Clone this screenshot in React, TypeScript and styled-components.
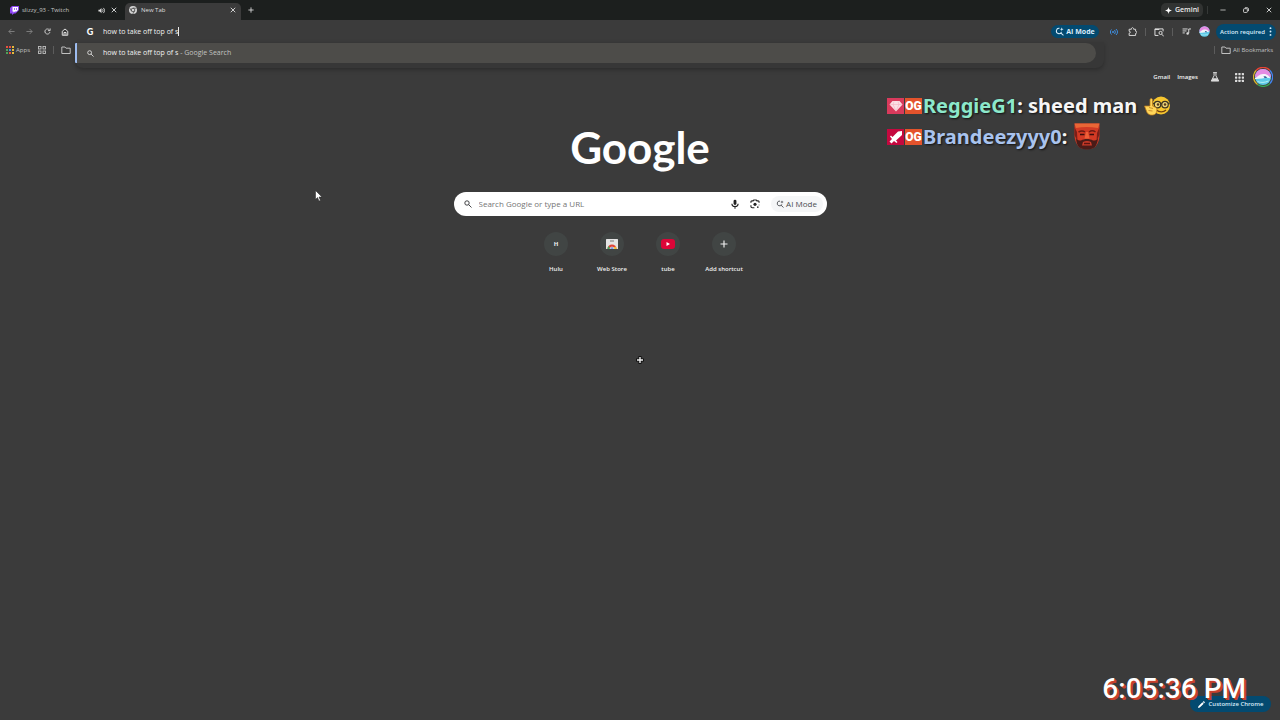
import React from "react";
import styled, { createGlobalStyle } from "styled-components";

const GlobalStyle = createGlobalStyle`
  *, *::before, *::after { box-sizing: border-box; }
  html, body { margin: 0; background: #3b3b3b; }
  body { font-family: "Open Sans", "Noto Sans", sans-serif; font-size: 7px; line-height: 10px; color: #e8e8e8; }
  button, input { font: inherit; color: inherit; border: 0; padding: 0; margin: 0; background: none; outline: none; }
  a { color: inherit; text-decoration: none; }
  svg { display: block; flex: none; }
`;

const Window = styled.div`
  position: relative;
  display: flex;
  flex-direction: column;
  min-height: 100vh;
  overflow: hidden;
  background: #3b3b3b;
`;

const Spacer = styled.div`
  flex: 1;
`;

const TabStrip = styled.header`
  display: flex;
  align-items: flex-end;
  height: 20px;
  padding-left: 3px;
  background: #1c1f1e;
`;

const Tab = styled.div<{ $active?: boolean }>`
  display: flex;
  align-items: center;
  gap: ${(p) => (p.$active ? 4 : 3)}px;
  width: ${(p) => (p.$active ? 116 : 122)}px;
  height: 17px;
  padding: ${(p) => (p.$active ? "0 4px 3px 4px" : "0 7px 3px 7px")};
  border-radius: 5px 5px 0 0;
  background: ${(p) => (p.$active ? "#3b3b3b" : "transparent")};
  color: ${(p) => (p.$active ? "#dedede" : "#c4c6c5")};
  font-size: 6px;
`;

const TabTitle = styled.span`
  flex: 1;
  white-space: nowrap;
`;

const IconButton = styled.button<{ $w?: number; $color?: string }>`
  display: flex;
  align-items: center;
  justify-content: center;
  flex: none;
  width: ${(p) => p.$w ?? 18}px;
  height: 14px;
  color: ${(p) => p.$color ?? "#dcdcdc"};
`;

const TabButton = styled(IconButton)`
  width: 9px;
  height: 10px;
`;

const StripControls = styled.div`
  display: flex;
  align-items: center;
  height: 20px;
`;

const GeminiButton = styled.button`
  display: flex;
  align-items: center;
  justify-content: center;
  gap: 3px;
  width: 42px;
  height: 14px;
  border-radius: 5px;
  background: #313332;
  color: #ececec;
  font-weight: 600;
`;

const Toolbar = styled.div`
  display: flex;
  align-items: center;
  height: 23px;
  padding: 0 4px 0 2px;
`;

const Omnibox = styled.div`
  display: flex;
  align-items: center;
  flex: 1;
  gap: 9px;
  padding-left: 12px;
`;

const GoogleMark = styled.span`
  width: 8px;
  text-align: center;
  font: 900 9px/10px Lato, sans-serif;
  color: #fff;
`;

const Query = styled.div`
  display: flex;
  align-items: center;
  flex: 1;
  color: #f1f1f1;
`;

const OmniInput = styled.input`
  field-sizing: content;
  height: 10px;
`;

const Caret = styled.span`
  width: 1px;
  height: 9px;
  background: #ececec;
`;

const BluePill = styled.button<{ $w: number; $h: number; $gap?: number }>`
  display: flex;
  align-items: center;
  justify-content: center;
  gap: ${(p) => p.$gap ?? 4}px;
  flex: none;
  width: ${(p) => p.$w}px;
  height: ${(p) => p.$h}px;
  border-radius: 8px;
  background: #034a70;
  color: #d8ecfa;
  font-size: 6px;
  font-weight: 600;
  white-space: nowrap;
`;

const AiPill = styled(BluePill)`
  font-size: 7px;
  font-weight: 700;
  margin-right: 6px;
`;

const Divider = styled.span<{ $m?: number; $dark?: boolean }>`
  width: 1px;
  height: 8px;
  margin: 0 ${(p) => p.$m ?? 4}px;
  background: ${(p) => (p.$dark ? "#353837" : "#5c5c5c")};
`;

const BookmarkBar = styled.nav`
  display: flex;
  align-items: center;
  height: 14px;
  padding: 0 7px 0 6px;
  color: #c0c0c0;
  font-size: 6px;
`;

const Bookmark = styled.a`
  display: flex;
  align-items: center;
  gap: 2px;
  white-space: nowrap;
`;

const BookmarkGroup = styled.div`
  display: flex;
  align-items: center;
  gap: 7px;
  margin-left: 8px;
`;

const Suggestions = styled.div`
  position: absolute;
  top: 42px;
  left: 75px;
  right: 176px;
  padding: 1px 8px 5px 0;
  border-radius: 0 0 8px 8px;
  background: #373737;
  box-shadow: 0 2px 4px rgba(0, 0, 0, 0.25);
`;

const Suggestion = styled.a`
  display: flex;
  align-items: center;
  gap: 9px;
  height: 20px;
  padding-left: 10px;
  border-left: 2px solid #9dbcf0;
  border-radius: 1px 10px 10px 1px;
  background: #4d4c49;
  color: #f1f1f1;
`;

const Muted = styled.span`
  color: #c2c2c0;
`;

const Account = styled.nav`
  display: flex;
  align-items: center;
  justify-content: flex-end;
  height: 20px;
  margin-top: 10px;
  padding-right: 7px;
  color: #f2f2f2;
  font-size: 6px;
  font-weight: 600;
`;

const AccountLink = styled.a`
  margin-right: 7px;
`;

const Main = styled.main`
  display: flex;
  flex-direction: column;
  align-items: center;
  padding: 32px 16px 0;
`;

const Wordmark = styled.h1`
  margin: 0;
  height: 73px;
  font: 700 44px/56px Lato, sans-serif;
  color: #fff;
`;

const SearchBox = styled.form`
  display: flex;
  align-items: center;
  width: 100%;
  max-width: 373px;
  height: 24px;
  padding: 0 4px 0 10px;
  border-radius: 12px;
  background: #fff;
  color: #303134;
`;

const SearchInput = styled.input`
  flex: 1;
  min-width: 0;
  height: 12px;
  margin-left: 7px;
  font-size: 8px;
  line-height: 12px;
  &::placeholder { color: #757575; opacity: 1; }
`;

const SearchAi = styled.button`
  display: flex;
  align-items: center;
  justify-content: center;
  gap: 2px;
  width: 52px;
  height: 16px;
  margin-left: 6px;
  border-radius: 8px;
  background: #f5f6f7;
  color: #4a4c50;
  font-size: 8px;
`;

const Shortcuts = styled.div`
  display: flex;
  margin-top: 16px;
`;

const Shortcut = styled.a`
  display: flex;
  flex-direction: column;
  align-items: center;
  gap: 8px;
  width: 56px;
  color: #f0f0f0;
  font-size: 6px;
  font-weight: 600;
  white-space: nowrap;
`;

const Disc = styled.span`
  display: flex;
  align-items: center;
  justify-content: center;
  width: 24px;
  height: 24px;
  border-radius: 50%;
  background: #414544;
  font-weight: 700;
`;

const Chat = styled.section`
  position: absolute;
  top: 90px;
  right: 93px;
  width: 300px;
`;

const ChatLine = styled.p`
  display: flex;
  align-items: center;
  height: 31px;
  margin: 0;
  font: 700 20px/31px "Noto Sans", sans-serif;
  color: #f6f6f6;
  text-shadow: 1px 1px 2px #111;
  white-space: pre;
`;

const ChatName = styled.span<{ $color: string }>`
  color: ${(p) => p.$color};
`;

const Badge = styled.span<{ $bg: string }>`
  display: flex;
  align-items: center;
  justify-content: center;
  flex: none;
  width: 17px;
  height: 16px;
  margin-right: 1px;
  background: ${(p) => p.$bg};
  color: #fff;
  font: 900 12px/16px "Liberation Sans Narrow", Roboto, sans-serif;
  text-shadow: none;
`;

const Emote = styled.span`
  margin-left: 7px;
`;

const Corner = styled.div`
  position: absolute;
  right: 9px;
  bottom: 8px;
`;

const Clock = styled.time`
  position: absolute;
  right: 34px;
  bottom: 15px;
  font: 500 28px/32px Roboto, sans-serif;
  color: #fff;
  text-shadow: 1px 1px 0 #c8402c, 2px 2px 0 #c8402c;
  white-space: nowrap;
`;

const Pointer = styled.div<{ $x: string; $y: string }>`
  position: absolute;
  left: ${(p) => p.$x};
  top: ${(p) => p.$y};
`;

type StrokeProps = { size?: number; w?: number; children: React.ReactNode };
const Stroke = ({ size = 8, w = 2, children }: StrokeProps) => (
  <svg width={size} height={size} viewBox="0 0 16 16" fill="none" stroke="currentColor" strokeWidth={w} aria-hidden="true">
    {children}
  </svg>
);

const Close = ({ size = 6 }: { size?: number }) => (
  <Stroke size={size} w={2.4}><path d="M2 2l12 12M14 2L2 14" /></Stroke>
);
const Plus = ({ size = 8 }: { size?: number }) => (
  <Stroke size={size} w={2.3}><path d="M8 1v14M1 8h14" /></Stroke>
);
const Magnifier = ({ size = 8 }: { size?: number }) => (
  <Stroke size={size} w={1.8}><circle cx="6" cy="6" r="4.4" /><path d="M9.3 9.3L15 15" /></Stroke>
);
const Folder = () => (
  <Stroke size={10} w={1.6}><path d="M1.3 3.2h5l1.6 1.9h6.8v8.5H1.3z" strokeLinejoin="round" /></Stroke>
);
const AiSearch = ({ size = 9 }: { size?: number }) => (
  <Stroke size={size} w={1.8}>
    <path d="M8 2.2a4.8 4.8 0 1 0 3.7 6.5M9.7 10L15 15" />
    <path d="M12 .5c.4 2.4 1 3 3.5 3.5-2.5.5-3.1 1.1-3.5 3.5-.4-2.4-1-3-3.5-3.5 2.5-.5 3.1-1.1 3.5-3.5z" fill="currentColor" stroke="none" />
  </Stroke>
);

const Twitch = () => (
  <svg width="9" height="9" viewBox="0 0 18 18" aria-hidden="true">
    <path d="M4 0L0 4v11h4v3l4-3h3l7-7V0z" fill="#8d45f5" />
    <path d="M5 2h11v6l-3 3h-3l-3 2v-2H5z" fill="#fff" />
    <path d="M9 4v4M13 4v4" stroke="#8d45f5" strokeWidth="1.6" />
  </svg>
);
const ChromeMark = () => (
  <svg width="8" height="8" viewBox="0 0 16 16" aria-hidden="true">
    <circle cx="8" cy="8" r="8" fill="#d4d4d4" />
    <circle cx="8" cy="8" r="3.6" fill="none" stroke="#3b3b3b" strokeWidth="1.5" />
    <path d="M8 4.4h7.2M4.9 9.8L1.3 3.7M11.1 9.8L7.5 16" stroke="#3b3b3b" strokeWidth="1.3" />
  </svg>
);

const Avatar = ({ size, ring }: { size: number; ring?: boolean }) => (
  <svg width={size} height={size} viewBox="0 0 40 40" aria-hidden="true">
    {ring && (
      <g fill="none" strokeWidth="2.5">
        <path d="M6 7A18.7 18.7 0 0 1 34 7" stroke="#ea4335" />
        <path d="M34 7A18.7 18.7 0 0 1 34 33" stroke="#4285f4" />
        <path d="M34 33A18.7 18.7 0 0 1 9 35" stroke="#34a853" />
        <path d="M9 35A18.7 18.7 0 0 1 6 7" stroke="#d9b52c" />
      </g>
    )}
    <circle cx="20" cy="20" r="16" fill="#5fcbe8" />
    <path d="M4 20a16 16 0 0 1 32 0c-9-4-21 4-32 0z" fill="#e58be3" />
    <path d="M4 22c5-1 8-9 18-8 7 0 11 5 13 9-7-4-20 2-31 1z" fill="#f4f4fa" />
    <path d="M21 19c4-1 6 0 7 3l-5 0z" fill="#3f5f9a" />
    <path d="M9 29c7 3 15 2 22-1" stroke="#b6f0f5" strokeWidth="2" fill="none" />
  </svg>
);

const NerdEmote = () => (
  <svg width="26" height="20" viewBox="0 0 52 40" aria-hidden="true">
    <circle cx="34" cy="19" r="18" fill="#f7c62f" />
    <path d="M17 15h34" stroke="#3c3423" strokeWidth="3" />
    <circle cx="27" cy="17" r="6.5" fill="#efd77a" stroke="#3c3423" strokeWidth="2.5" />
    <circle cx="42" cy="17" r="6.5" fill="#efd77a" stroke="#3c3423" strokeWidth="2.5" />
    <circle cx="28" cy="17" r="2.5" fill="#5a3a1a" />
    <circle cx="42" cy="17" r="2.5" fill="#5a3a1a" />
    <path d="M25 28c5 5 14 5 19 0" stroke="#70400f" strokeWidth="2.5" fill="none" />
    <path d="M1 20l11 0V8c0-4 5-4 5 0v12l7 3c3 2 2 12-3 14-6 3-13 0-15-4z" fill="#ffd65a" stroke="#b9781c" strokeWidth="1.5" />
    <path d="M10 23l8 2M9 29l8 1" stroke="#b9781c" strokeWidth="1.5" />
  </svg>
);

const FaceEmote = () => (
  <svg width="26" height="27" viewBox="0 0 52 54" aria-hidden="true">
    <path d="M1 1h50v22c0 12-4 20-9 25-8 6-24 6-32 0-5-6-9-13-9-25z" fill="#d23a24" />
    <path d="M1 1h50l-3 9c-15-3-31-3-44 0z" fill="#ea6636" />
    <path d="M1 8l5 10 1 18-6-12zM51 8l-5 12-1 17 6-14z" fill="#7c1f18" />
    <path d="M9 18c5-3 9-3 13 0M30 18c4-3 9-3 13 0" stroke="#6d1b14" strokeWidth="3" fill="none" />
    <path d="M12 23h9M31 23h9" stroke="#3a0f0d" strokeWidth="3" />
    <path d="M24 18l-3 13h10l-3-13z" fill="#ee6038" />
    <path d="M4 31c4 4 6 4 10 4 7-4 17-4 24 0 4 0 7 0 10-4-1 9-4 14-7 18-8 5-22 5-30 0-4-4-6-9-7-18z" fill="#4a1b18" />
    <path d="M18 38c5-3 11-3 16 0l2 7H16z" fill="#c93a28" />
    <path d="M20 41h12" stroke="#5c1411" strokeWidth="3" />
  </svg>
);

const appColors = ["#e8503f", "#e8503f", "#e6b93b", "#4fa45a", "#4b86e8", "#e6b93b", "#4fa45a", "#e8503f", "#e6b93b"];

export default function App() {
  return (
    <Window>
      <GlobalStyle />
      <TabStrip>
        <Tab>
          <Twitch />
          <TabTitle>slizzy_93 - Twitch</TabTitle>
          <TabButton aria-label="Mute tab">
            <Stroke size={7}>
              <path d="M1 6h3l4-4v12l-4-4H1z" fill="currentColor" stroke="none" />
              <path d="M10 5c2 2 2 4 0 6M12 2c4 3 4 9 0 12" />
            </Stroke>
          </TabButton>
          <TabButton aria-label="Close Twitch tab"><Close /></TabButton>
        </Tab>
        <Tab $active>
          <ChromeMark />
          <TabTitle>New Tab</TabTitle>
          <TabButton aria-label="Close New Tab"><Close /></TabButton>
        </Tab>
        <StripControls>
          <IconButton $w={20} aria-label="Open new tab"><Plus size={6} /></IconButton>
        </StripControls>
        <Spacer />
        <StripControls>
          <GeminiButton>
            <svg width="7" height="7" viewBox="0 0 16 16" aria-hidden="true">
              <path d="M8 0c1 5.500 2.500 7 8 8-5.500 1-7 2.500-8 8-1-5.500-2.500-7-8-8 5.500-1 7-2.500 8-8z" fill="#fff" />
            </svg>
            Gemini
          </GeminiButton>
          <Divider $dark />
          <IconButton $w={22} aria-label="Minimize"><Stroke size={6}><path d="M1 8h14" /></Stroke></IconButton>
          <IconButton $w={23} aria-label="Restore">
            <Stroke size={6} w={2.4}><rect x="1.5" y="4.5" width="10" height="10" rx="2" /><path d="M5 2h6q3.500 0 3.500 3.500V11" /></Stroke>
          </IconButton>
          <IconButton $w={23} aria-label="Close window"><Close /></IconButton>
        </StripControls>
      </TabStrip>

      <Toolbar>
        <IconButton $color="#858585" aria-label="Back"><Stroke size={7}><path d="M15 8H2M8 2L2 8l6 6" /></Stroke></IconButton>
        <IconButton $color="#858585" aria-label="Forward"><Stroke size={7}><path d="M1 8h13M8 2l6 6-6 6" /></Stroke></IconButton>
        <IconButton aria-label="Reload"><Stroke size={7}><path d="M13.500 9.500A5.800 5.800 0 1 1 12.500 4.500M14 1v5H9" /></Stroke></IconButton>
        <IconButton aria-label="Home"><Stroke><path d="M2.500 6.500L8 2l5.500 4.500V14.500h-11zM6 14.500V9h4v5.500" /></Stroke></IconButton>
        <Omnibox>
          <GoogleMark>G</GoogleMark>
          <Query>
            <OmniInput aria-label="Address and search bar" defaultValue="how to take off top of s" />
            <Caret />
          </Query>
        </Omnibox>
        <AiPill $w={48} $h={13} $gap={2}><AiSearch />AI Mode</AiPill>
        <IconButton $color="#3f8fe0" aria-label="Media output">
          <Stroke size={8}><circle cx="6" cy="8" r="2" fill="currentColor" stroke="none" /><path d="M3 3c-3 3-3 7 0 10M9 4c2 3 2 5 0 8M12 2c4 4 4 8 0 12" /></Stroke>
        </IconButton>
        <IconButton aria-label="Extensions">
          <Stroke size={9} w={1.7}><path d="M2 4h4c0-4 4-4 4 0h3.500v3.500c3 0 3 4 0 4V15H2v-4c3 0 3-3.500 0-3.500z" strokeLinejoin="round" /></Stroke>
        </IconButton>
        <Divider />
        <IconButton aria-label="Search tabs">
          <Stroke size={10} w={1.6}><path d="M7 13.500H1.500V3h13v4M1.500 4h7" /><circle cx="10.500" cy="9.500" r="2.500" /><path d="M12.500 11.500L15.500 15" /></Stroke>
        </IconButton>
        <Divider />
        <IconButton aria-label="Media controls">
          <Stroke size={9} w={1.7}><path d="M1 3.500h9M1 7h7M1 10.500h4M12 11V3.500h4" /><circle cx="10" cy="11.500" r="2.200" fill="currentColor" stroke="none" /></Stroke>
        </IconButton>
        <IconButton aria-label="Profile"><Avatar size={13} /></IconButton>
        <Divider $m={1} style={{ visibility: "hidden" }} />
        <BluePill $w={60} $h={16}>
          Action required
          <svg width="3" height="9" viewBox="0 0 4 16" fill="currentColor" aria-hidden="true"><circle cx="2" cy="2" r="1.700" /><circle cx="2" cy="8" r="1.700" /><circle cx="2" cy="14" r="1.700" /></svg>
        </BluePill>
      </Toolbar>

      <BookmarkBar>
        <Bookmark href="#apps">
          <svg width="8" height="8" viewBox="0 0 16 16" aria-hidden="true">
            {appColors.map((c, i) => <rect key={i} x={(i % 3) * 6} y={Math.floor(i / 3) * 6} width="4" height="4" fill={c} />)}
          </svg>
          Apps
        </Bookmark>
        <BookmarkGroup>
          <Stroke w={1.8}><rect x="1" y="1" width="5" height="5" /><rect x="10" y="1" width="5" height="5" /><rect x="1" y="10" width="5" height="5" /><rect x="10" y="10" width="5" height="5" /></Stroke>
          <Divider $m={0} />
          <Folder />
        </BookmarkGroup>
        <Spacer />
        <Divider $m={6} />
        <Bookmark href="#bookmarks"><Folder />All Bookmarks</Bookmark>
      </BookmarkBar>

      <Suggestions>
        <Suggestion href="#search">
          <Magnifier size={7} />
          <span>how to take off top of s <Muted>- Google Search</Muted></span>
        </Suggestion>
      </Suggestions>

      <Account>
        <AccountLink href="#gmail">Gmail</AccountLink>
        <AccountLink href="#images">Images</AccountLink>
        <IconButton $w={20} aria-label="Search labs">
          <Stroke size={10} w={1.6}><path d="M5 1h6M6.500 1v5L2 14.500h12L9.500 6V1" /><path d="M4.500 10h7l2.500 4.500H2z" fill="currentColor" stroke="none" /></Stroke>
        </IconButton>
        <IconButton $w={28} aria-label="Google apps">
          <svg width="9" height="9" viewBox="0 0 16 16" fill="currentColor" aria-hidden="true">
            {appColors.map((_, i) => <rect key={i} x={(i % 3) * 6} y={Math.floor(i / 3) * 6} width="4" height="4" rx="1" />)}
          </svg>
        </IconButton>
        <IconButton $w={20} aria-label="Google account"><Avatar size={20} ring /></IconButton>
      </Account>

      <Main>
        <Wordmark>Google</Wordmark>
        <SearchBox>
          <Magnifier />
          <SearchInput aria-label="Search" placeholder="Search Google or type a URL" />
          <IconButton type="button" $w={20} $color="#222" aria-label="Voice search">
            <Stroke size={10} w={1.7}><rect x="5.700" y="1" width="4.600" height="8.500" rx="2.300" fill="currentColor" stroke="none" /><path d="M3 7.500c0 6 10 6 10 0M8 12v3.500" /></Stroke>
          </IconButton>
          <IconButton type="button" $w={20} $color="#222" aria-label="Search by image">
            <Stroke size={10} w={1.8}><path d="M1.500 6V4.500q0-1.500 1.500-1.500h2l1-1.500h4L11 3h2q1.500 0 1.500 1.500V6M1.500 10v2q0 2 2 2H7M14.500 9v1" /><circle cx="8" cy="8.500" r="2.500" fill="currentColor" stroke="none" /><circle cx="12.500" cy="13" r="1.300" fill="currentColor" stroke="none" /></Stroke>
          </IconButton>
          <SearchAi type="button"><AiSearch size={8} />AI Mode</SearchAi>
        </SearchBox>
        <Shortcuts>
          <Shortcut href="#hulu"><Disc>H</Disc>Hulu</Shortcut>
          <Shortcut href="#store">
            <Disc>
              <svg width="12" height="10" viewBox="0 0 24 20" aria-hidden="true">
                <rect width="24" height="20" rx="1" fill="#e4e4e4" />
                <path d="M8 4h8" stroke="#777" strokeWidth="2" />
                <path d="M3 20a9 9 0 0 1 18 0z" fill="#df4438" />
                <path d="M3 20a9 9 0 0 1 2-6l4 6z" fill="#3fa45a" />
                <path d="M21 20a9 9 0 0 0-1-4h-5l1 4z" fill="#f2bb2e" />
                <path d="M8 20a4 4 0 0 1 8 0z" fill="#4779d8" stroke="#fff" strokeWidth="1.200" />
              </svg>
            </Disc>
            Web Store
          </Shortcut>
          <Shortcut href="#tube">
            <Disc>
              <svg width="14" height="10" viewBox="0 0 28 20" aria-hidden="true"><rect width="28" height="20" rx="6" fill="#dc0538" /><path d="M11 6l7 4-7 4z" fill="#fff" /></svg>
            </Disc>
            tube
          </Shortcut>
          <Shortcut href="#add"><Disc><Plus /></Disc>Add shortcut</Shortcut>
        </Shortcuts>
      </Main>

      <Chat aria-label="Chat">
        <ChatLine>
          <Badge $bg="#d93a5c"><svg width="14" height="12" viewBox="0 0 28 24" aria-hidden="true"><path d="M7 2h14l6 7-13 14L1 9z" fill="#fbdfe5" /><path d="M2 9h24M10 3l-2 6 6 13 6-13-2-6" stroke="#f2a9b8" fill="none" /></svg></Badge>
          <Badge $bg="#e4532c">OG</Badge>
          <ChatName $color="#8ce8cb">ReggieG1</ChatName>: sheed man
          <Emote><NerdEmote /></Emote>
        </ChatLine>
        <ChatLine>
          <Badge $bg="#c5083f"><svg width="14" height="14" viewBox="0 0 28 28" aria-hidden="true"><path d="M26 2v8L14 21l3 3-2 2-5-4-5 5-4-4 5-5-4-5 2-2 3 3L18 3z" fill="#fff" /></svg></Badge>
          <Badge $bg="#e4532c">OG</Badge>
          <ChatName $color="#a9c3ee">Brandeezyyy0</ChatName>:
          <Emote><FaceEmote /></Emote>
        </ChatLine>
      </Chat>

      <Pointer $x="315px" $y="190px">
        <svg width="8" height="12" viewBox="0 0 16 24" aria-hidden="true"><path d="M1 1v18l4-4 3 7 3-1-3-7h6z" fill="#fff" stroke="#222" strokeWidth="1" /></svg>
      </Pointer>
      <Pointer $x="calc(50% - 4px)" $y="356px">
        <svg width="8" height="8" viewBox="0 0 8 8" aria-hidden="true"><path d="M2.500 0h3v2.500H8v3H5.500V8h-3V5.500H0v-3h2.500z" fill="#111" /><path d="M4 1v6M1 4h6" stroke="#eee" strokeWidth="1.400" /></svg>
      </Pointer>

      <Corner>
        <BluePill $w={81} $h={16}>
          <svg width="7" height="7" viewBox="0 0 16 16" aria-hidden="true"><path d="M0 16l1-4L10 3l3 3-9 9zM11 2l2-2 3 3-2 2z" fill="#fff" /></svg>
          Customize Chrome
        </BluePill>
      </Corner>
      <Clock>6:05:36 PM</Clock>
    </Window>
  );
}
